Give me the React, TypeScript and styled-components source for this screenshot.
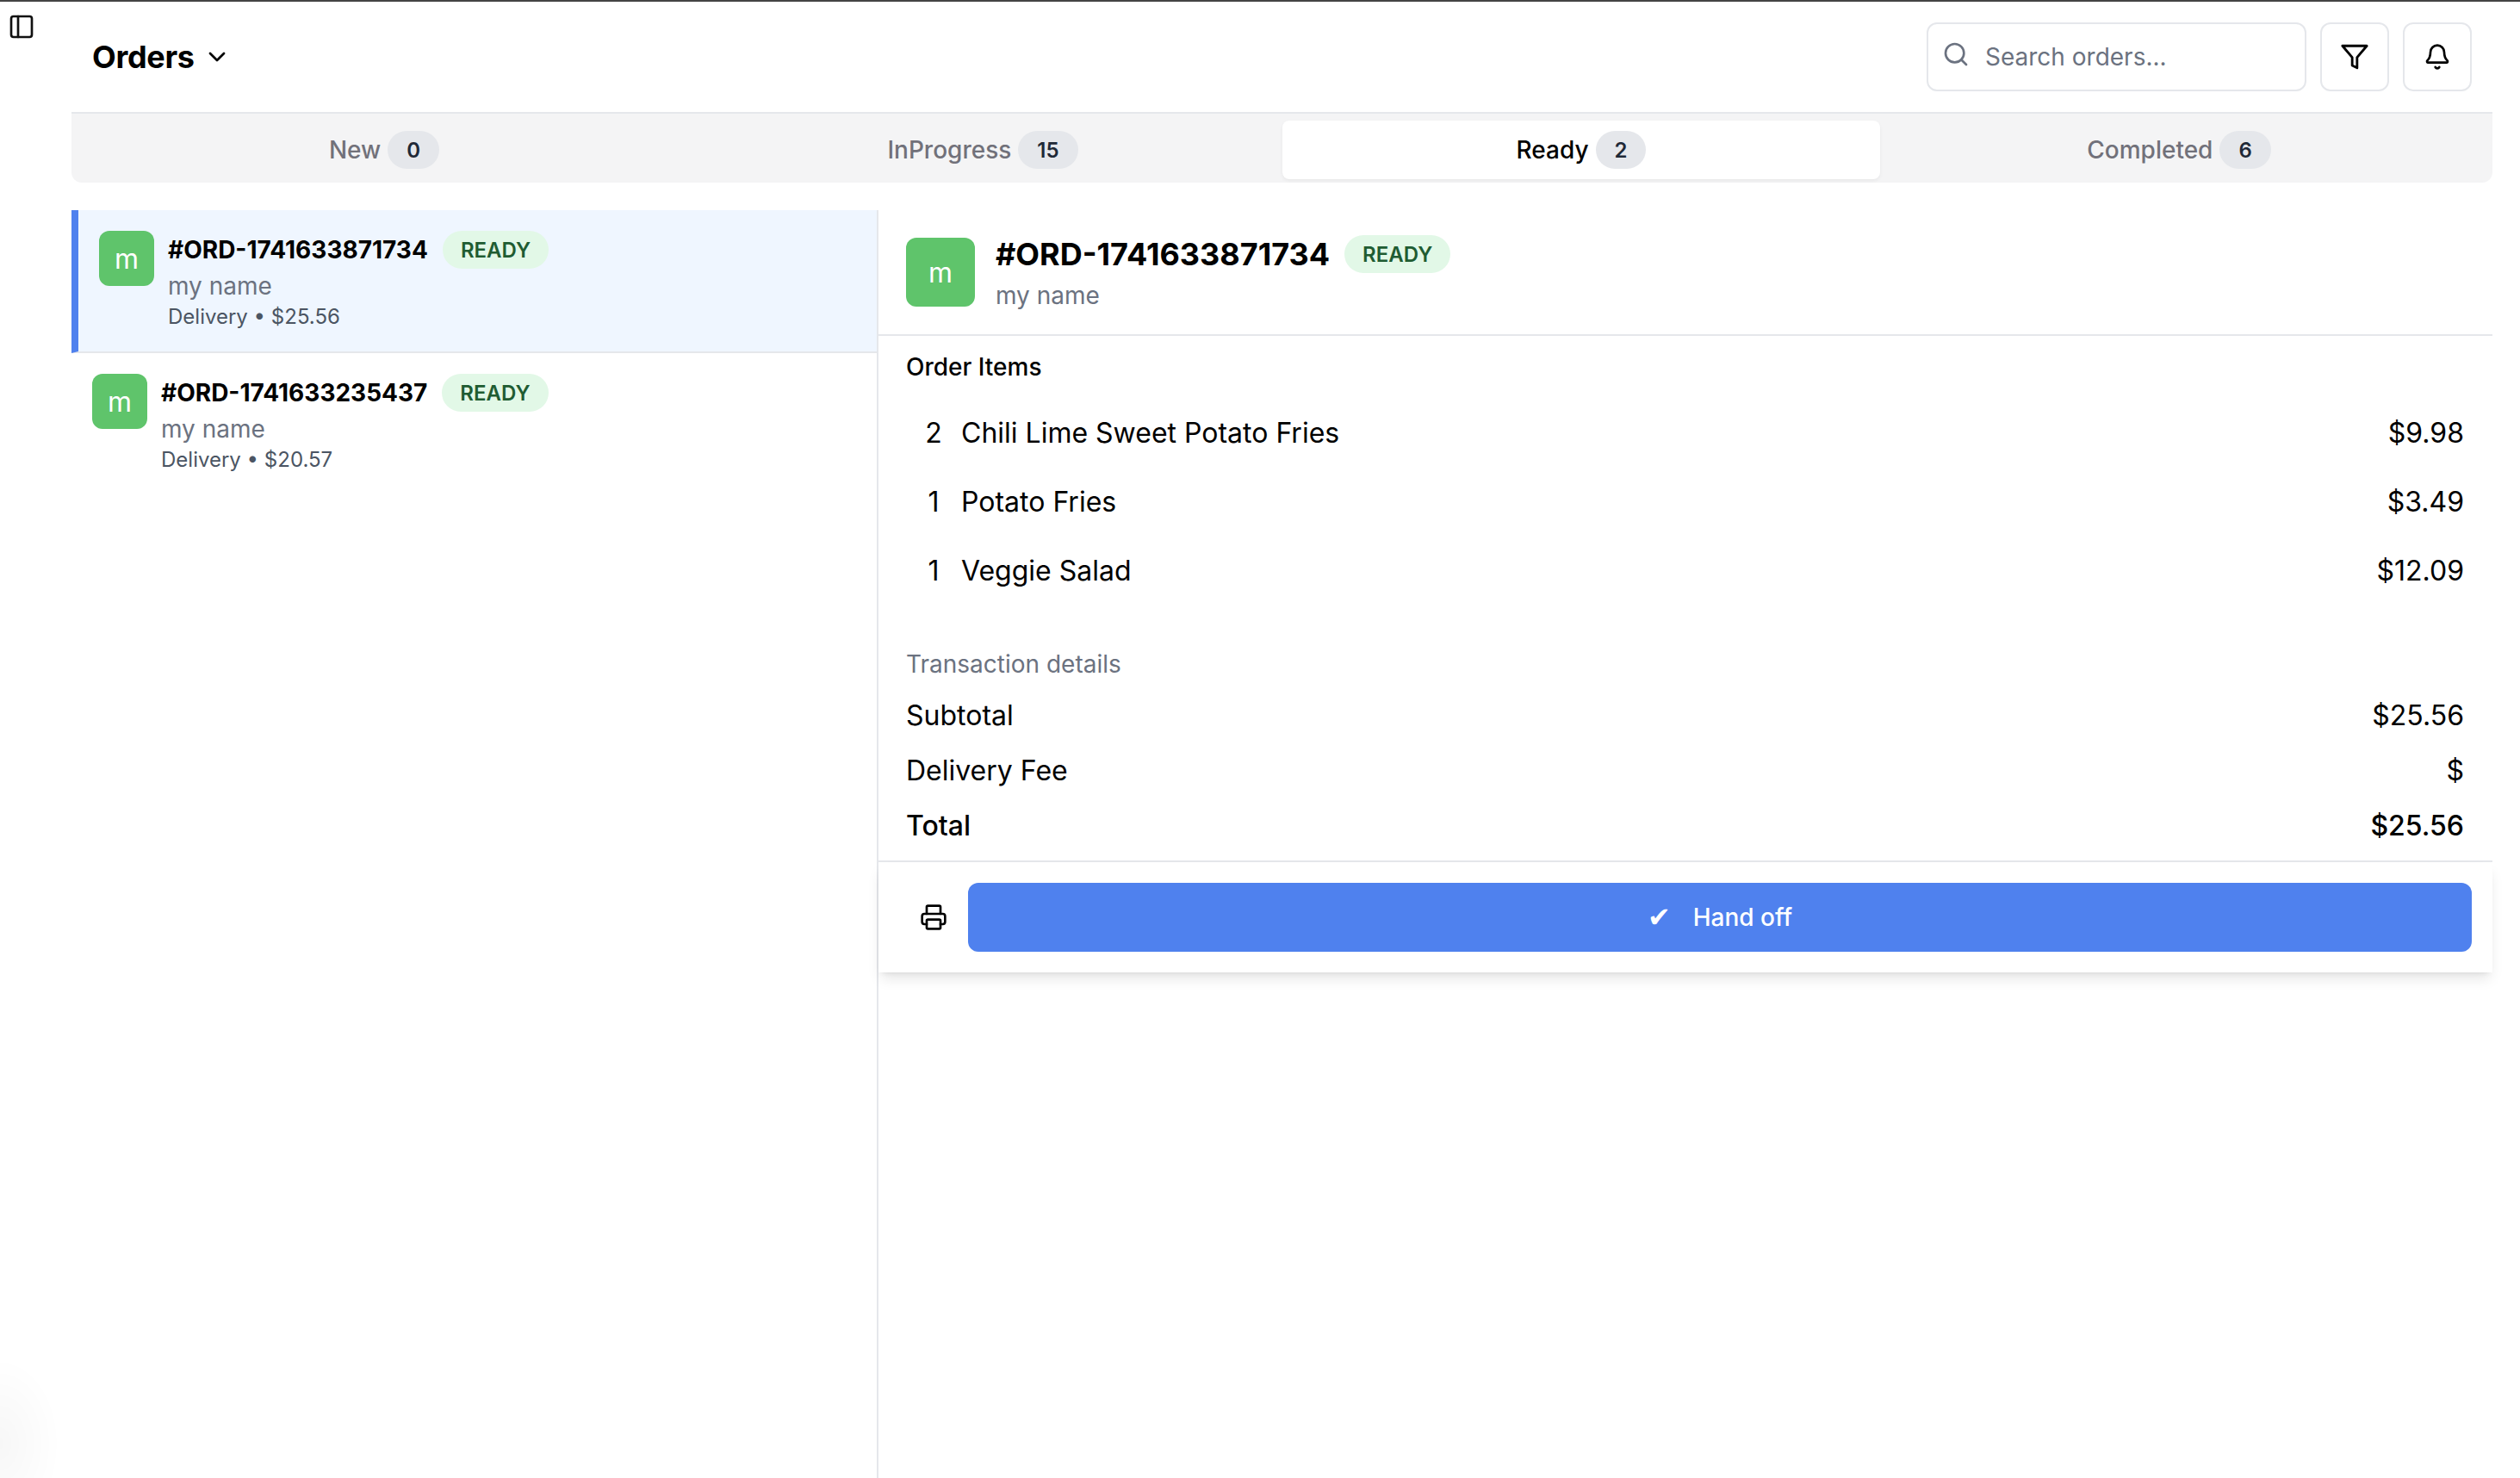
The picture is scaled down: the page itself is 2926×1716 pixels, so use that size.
import React from 'react'
import styled, { createGlobalStyle } from 'styled-components'
import { Bell, ChevronDown, PanelLeft, Printer, Search } from 'lucide-react'
import { FiFilter } from 'react-icons/fi'

const GlobalStyle = createGlobalStyle`
	html, body {
		margin: 0;
		padding: 0;
		background: #ffffff;
	}
	* {
		box-sizing: border-box;
	}
	body {
		font-family: Inter, "Liberation Sans", sans-serif;
		color: #000000;
	}
`

const Page = styled.div`
	display: flex;
	width: 2926px;
	height: 1716px;
	overflow: hidden;
	border-top: 2px solid #444444;
`
const Rail = styled.div`
	width: 83px;
	flex-shrink: 0;
	padding: 13px 0 0 9px;
	color: #111111;
`
const Main = styled.div`
	flex-grow: 1;
	display: flex;
	flex-direction: column;
	padding-right: 32px;
	min-width: 0;
`
const Header = styled.header`
	display: flex;
	align-items: center;
	justify-content: space-between;
	height: 130px;
	padding: 0 24px;
	border-bottom: 2px solid #e5e7eb;
`
const TitleButton = styled.div`
	display: flex;
	align-items: center;
	gap: 10px;
	font-size: 36px;
	font-weight: 700;
	letter-spacing: -0.3px;
`
const HeaderActions = styled.div`
	display: flex;
	align-items: center;
	gap: 16px;
`
const SearchBox = styled.div`
	display: flex;
	align-items: center;
	gap: 18px;
	width: 441px;
	height: 80px;
	padding: 0 16px;
	border: 2px solid #e5e7eb;
	border-radius: 12px;
	font-size: 28px;
	color: #6b7280;
	svg {
		margin-top: -6px;
	}
`
const IconButton = styled.div`
	display: flex;
	align-items: center;
	justify-content: center;
	width: 80px;
	height: 80px;
	border: 2px solid #e5e7eb;
	border-radius: 12px;
`
const Tabs = styled.div`
	display: flex;
	height: 80px;
	padding: 8px 12px 4px 8px;
	gap: 5px;
	background: #f4f4f5;
	border-radius: 0 0 12px 12px;
	margin-bottom: 32px;
`
const Tab = styled.div<{ $active?: boolean }>`
	flex: 1;
	display: flex;
	align-items: center;
	justify-content: center;
	border-radius: 8px;
	font-size: 28px;
	font-weight: 500;
	color: ${p => (p.$active ? '#000000' : '#71717a')};
	background: ${p => (p.$active ? '#ffffff' : 'transparent')};
	box-shadow: ${p => (p.$active ? '0 2px 4px rgba(0, 0, 0, 0.05)' : 'none')};
`
const TabLabel = styled.span`
	display: flex;
	align-items: center;
	gap: 8px;
	${Tab}:first-child & {
		margin-left: 16px;
	}
	${Tab}:nth-child(2) & {
		margin-left: 8px;
	}
	${Tab}:last-child & {
		margin-right: 10px;
	}
`
const Count = styled.span`
	display: flex;
	align-items: center;
	justify-content: center;
	height: 44px;
	padding: 0 22px;
	border-radius: 22px;
	background: #e5e7eb;
	color: #1f2937;
	font-size: 24px;
	font-weight: 600;
`
const Content = styled.div`
	flex-grow: 1;
	display: flex;
	min-height: 0;
`
const OrderList = styled.div`
	width: 937px;
	flex-shrink: 0;
	border-right: 2px solid #e5e7eb;
`
const OrderRow = styled.div<{ $selected?: boolean }>`
	display: flex;
	align-items: flex-start;
	gap: 16px;
	height: 166px;
	padding: 24px;
	background: ${p => (p.$selected ? '#eff6ff' : 'transparent')};
	border-left: ${p => (p.$selected ? '8px solid #4f81ee' : 'none')};
	border-bottom: ${p => (p.$selected ? '2px solid #e5e7eb' : 'none')};
`
const Avatar = styled.div<{ $large?: boolean }>`
	display: flex;
	align-items: center;
	justify-content: center;
	flex-shrink: 0;
	width: ${p => (p.$large ? '80px' : '64px')};
	height: ${p => (p.$large ? '80px' : '64px')};
	border-radius: 12px;
	background: #5fc46b;
	color: #ffffff;
	font-size: 32px;
	font-weight: 400;
`
const OrderTop = styled.div`
	display: flex;
	align-items: center;
	gap: 17px;
	height: 44px;
`
const OrderId = styled.span`
	font-size: 28px;
	font-weight: 700;
`
const Badge = styled.span`
	display: flex;
	align-items: center;
	height: 44px;
	padding: 0 21px;
	border-radius: 22px;
	background: #e2f8e7;
	color: #1f5c32;
	font-size: 24px;
	font-weight: 600;
`
const CustomerName = styled.div`
	margin-top: 2px;
	font-size: 28px;
	line-height: 36px;
	color: #6b7280;
`
const OrderMeta = styled.div`
	margin-top: 2px;
	font-size: 24px;
	line-height: 32px;
	color: #4b5563;
`
const Detail = styled.div`
	flex-grow: 1;
	display: flex;
	flex-direction: column;
	min-width: 0;
`
const DetailHeader = styled.div`
	display: flex;
	gap: 24px;
	height: 146px;
	padding: 32px;
	border-bottom: 2px solid #e5e7eb;
`
const DetailTop = styled.div`
	display: flex;
	align-items: center;
	gap: 17px;
	height: 44px;
	margin: -3px 0 8px;
`
const DetailId = styled.span`
	font-size: 36px;
	font-weight: 700;
`
const SectionTitle = styled.div`
	padding: 0 32px;
	margin-top: 18px;
	font-size: 28px;
	line-height: 36px;
	font-weight: 500;
`
const Items = styled.div`
	display: flex;
	flex-direction: column;
	padding: 18px 32px 0;
`
const ItemRow = styled.div`
	display: flex;
	align-items: center;
	height: 80px;
	font-size: 32px;
`
const Quantity = styled.span`
	width: 64px;
	text-align: center;
`
const ItemName = styled.span`
	flex-grow: 1;
`
const Price = styled.span`
	padding-right: 1px;
`
const TransactionTitle = styled.div`
	padding: 0 32px;
	margin-top: 51px;
	font-size: 28px;
	line-height: 36px;
	color: #6b7280;
`
const Totals = styled.div`
	padding: 9px 32px 9px;
	border-bottom: 2px solid #e5e7eb;
`
const TotalRow = styled.div<{ $strong?: boolean }>`
	display: flex;
	align-items: center;
	justify-content: space-between;
	height: 64px;
	font-size: 32px;
	font-weight: ${p => (p.$strong ? 500 : 400)};
`
const Footer = styled.div`
	display: flex;
	align-items: center;
	height: 128px;
	padding: 24px;
	background: #ffffff;
	box-shadow: 0 10px 15px -3px rgba(0, 0, 0, 0.1), 0 4px 6px -4px rgba(0, 0, 0, 0.1);
`
const PrintButton = styled.div`
	display: flex;
	align-items: center;
	justify-content: center;
	width: 80px;
	height: 80px;
	flex-shrink: 0;
`
const HandOffButton = styled.div`
	flex-grow: 1;
	display: flex;
	align-items: center;
	justify-content: center;
	gap: 26px;
	height: 80px;
	border-radius: 12px;
	background: #4f81ee;
	color: #ffffff;
	font-size: 28px;
	font-weight: 500;
`
const CheckMark = styled.span`
	font-family: "DejaVu Sans", sans-serif;
	font-size: 32px;
	font-weight: 400;
`
const CornerGlow = styled.div`
	position: fixed;
	left: -70px;
	bottom: -60px;
	width: 140px;
	height: 200px;
	border-radius: 50%;
	background: radial-gradient(closest-side, rgba(0, 0, 0, 0.03), rgba(0, 0, 0, 0));
	pointer-events: none;
`

const tabs = [
    { label: 'New', count: 0 },
    { label: 'InProgress', count: 15 },
    { label: 'Ready', count: 2, active: true },
    { label: 'Completed', count: 6 },
]

const orders = [
    { id: '#ORD-1741633871734', meta: 'Delivery • $25.56', selected: true },
    { id: '#ORD-1741633235437', meta: 'Delivery • $20.57' },
]

const items = [
    { qty: 2, name: 'Chili Lime Sweet Potato Fries', price: '$9.98' },
    { qty: 1, name: 'Potato Fries', price: '$3.49' },
    { qty: 1, name: 'Veggie Salad', price: '$12.09' },
]

const App = () => {
    return <>
        <GlobalStyle />
        <Page>
            <Rail>
                <PanelLeft size={32} strokeWidth={2} />
            </Rail>
            <Main>
                <Header>
                    <TitleButton>
                        Orders
                        <ChevronDown size={32} strokeWidth={2} />
                    </TitleButton>
                    <HeaderActions>
                        <SearchBox>
                            <Search size={32} strokeWidth={2} color="#6b7280" />
                            Search orders...
                        </SearchBox>
                        <IconButton>
                            <FiFilter size={34} />
                        </IconButton>
                        <IconButton>
                            <Bell size={32} strokeWidth={2} />
                        </IconButton>
                    </HeaderActions>
                </Header>
                <Tabs>
                    {tabs.map(tab => (
                        <Tab key={tab.label} $active={tab.active}>
                            <TabLabel>
                                {tab.label}
                                <Count>{tab.count}</Count>
                            </TabLabel>
                        </Tab>
                    ))}
                </Tabs>
                <Content>
                    <OrderList>
                        {orders.map(order => (
                            <OrderRow key={order.id} $selected={order.selected}>
                                <Avatar>m</Avatar>
                                <div>
                                    <OrderTop>
                                        <OrderId>{order.id}</OrderId>
                                        <Badge>READY</Badge>
                                    </OrderTop>
                                    <CustomerName>my name</CustomerName>
                                    <OrderMeta>{order.meta}</OrderMeta>
                                </div>
                            </OrderRow>
                        ))}
                    </OrderList>
                    <Detail>
                        <DetailHeader>
                            <Avatar $large>m</Avatar>
                            <div>
                                <DetailTop>
                                    <DetailId>#ORD-1741633871734</DetailId>
                                    <Badge>READY</Badge>
                                </DetailTop>
                                <CustomerName>my name</CustomerName>
                            </div>
                        </DetailHeader>
                        <SectionTitle>Order Items</SectionTitle>
                        <Items>
                            {items.map(item => (
                                <ItemRow key={item.name}>
                                    <Quantity>{item.qty}</Quantity>
                                    <ItemName>{item.name}</ItemName>
                                    <Price>{item.price}</Price>
                                </ItemRow>
                            ))}
                        </Items>
                        <TransactionTitle>Transaction details</TransactionTitle>
                        <Totals>
                            <TotalRow><span>Subtotal</span><Price>$25.56</Price></TotalRow>
                            <TotalRow><span>Delivery Fee</span><Price>$</Price></TotalRow>
                            <TotalRow $strong><span>Total</span><Price>$25.56</Price></TotalRow>
                        </Totals>
                        <Footer>
                            <PrintButton>
                                <Printer size={32} strokeWidth={2} />
                            </PrintButton>
                            <HandOffButton>
                                <CheckMark>✔</CheckMark>
                                <span>Hand off</span>
                            </HandOffButton>
                        </Footer>
                    </Detail>
                </Content>
            </Main>
            <CornerGlow />
        </Page>
    </>
}

export default App
